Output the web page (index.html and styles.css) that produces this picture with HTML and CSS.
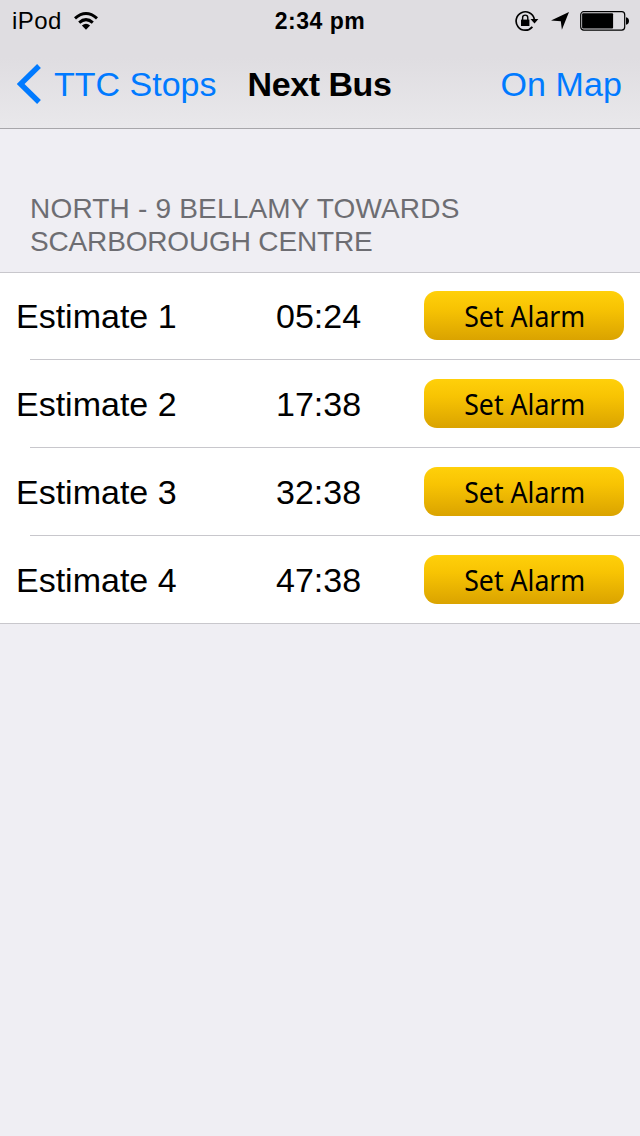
FILE: index.html
```html
<!DOCTYPE html>
<html lang="en">
<head>
<meta charset="utf-8">
<title>Next Bus</title>
<link rel="stylesheet" href="styles.css">
</head>
<body>
<header class="top">
  <div class="status">
    <div class="status-left">
      <span class="device">iPod</span>
      <svg class="wifi" width="26" height="20" viewBox="0 0 26 20">
        <g fill="none" stroke="#000" stroke-width="3">
          <path d="M2 7.4Q13 -2.4 24 7.4"/>
          <path d="M6.2 11.6Q13 5.6 19.8 11.6"/>
        </g>
        <path d="M8.9 14.4Q13 11 17.1 14.4L13 18.7Z"/>
      </svg>
    </div>
    <span class="clock">2:34 pm</span>
    <div class="status-right">
      <svg width="24" height="22" viewBox="0 0 24 22">
        <path d="M17.4 16.9A9.2 9.2 0 1 1 19.3 9" fill="none" stroke="#000" stroke-width="1.7"/>
        <path d="M15.5 9H23.4L19.5 13.6Z"/>
        <path d="M6 9.6H14.4V16H6Z"/>
        <path d="M7.6 10V7.7a2.6 2.6 0 0 1 5.2 0V10" fill="none" stroke="#000" stroke-width="1.4"/>
      </svg>
      <svg class="arrow" width="18" height="18" viewBox="0 0 18 18"><path d="M18 0L10.9 17.8L9.8 9.2L0 8.6Z"/></svg>
      <svg class="battery" width="50" height="20" viewBox="0 0 50 20">
        <rect x=".7" y=".7" width="44" height="18.4" rx="3" fill="none" stroke="#000" stroke-width="1.2"/>
        <rect x="2.1" y="2.3" width="31" height="15.2" rx="1"/>
        <path d="M46 6.2Q49 7 49 10T46 13.8Z"/>
      </svg>
    </div>
  </div>
  <nav class="nav">
    <a class="back">
      <svg width="24" height="40" viewBox="0 0 24 40"><path d="M22 2L3.6 20L22 38" fill="none" stroke="#007aff" stroke-width="5.4"/></svg>
      <span class="back-label">TTC Stops</span>
    </a>
    <h1 class="title">Next Bus</h1>
    <a class="map">On Map</a>
  </nav>
</header>
<main>
  <h2 class="route"><span class="route-name">NORTH - 9 BELLAMY TOWARDS</span><span class="route-end">SCARBOROUGH CENTRE</span></h2>
  <ul class="list">
    <li class="row"><span class="name">Estimate 1</span><span class="time">05:24</span><button class="alarm"><span class="alarm-label">Set Alarm</span></button></li>
    <li class="row"><span class="name">Estimate 2</span><span class="time">17:38</span><button class="alarm"><span class="alarm-label">Set Alarm</span></button></li>
    <li class="row"><span class="name">Estimate 3</span><span class="time">32:38</span><button class="alarm"><span class="alarm-label">Set Alarm</span></button></li>
    <li class="row"><span class="name">Estimate 4</span><span class="time">47:38</span><button class="alarm"><span class="alarm-label">Set Alarm</span></button></li>
  </ul>
</main>
</body>
</html>
```
FILE: styles.css
```css
* { box-sizing: border-box; }
body {
  margin: 0;
  min-height: 1136px;
  background: #efeef3;
  color: #000;
  font-family: "Liberation Sans", Arial, sans-serif;
}
.top {
  height: 129px;
  border-bottom: 1px solid #a7a6aa;
  background: linear-gradient(#dfdde1 0, #dfdde1 45%, #e9e8eb 100%);
}
.status {
  display: grid;
  grid-template-columns: 1fr auto 1fr;
  align-items: center;
  height: 42px;
  padding: 2px 11px 0;
  font-size: 24px;
  line-height: 38px;
}
.status-left, .status-right { display: flex; align-items: center; }
.status-left { padding-left: 1px; }
.device { letter-spacing: 0.4px; }
.wifi { margin-left: 11px; }
.status-left, .clock, .status-right { height: 38px; }
.clock { font-weight: 700; font-size: 23px; letter-spacing: 0.5px; }
.status-right { justify-content: flex-end; margin-right: -1px; }
.status > * { margin-bottom: 2px; }
.arrow { margin-left: 12px; }
.battery { margin-left: 11px; }
.nav {
  display: grid;
  grid-template-columns: 1fr auto 1fr;
  align-items: center;
  height: 86px;
  padding: 0 18px 2px 17px;
  font-size: 34px;
}
.back, .map { color: #007aff; white-space: nowrap; }
.back { display: flex; align-items: center; }
.back-label { margin-left: 13px; }
.title { margin: 0; font-size: 34px; font-weight: 700; letter-spacing: -0.45px; }
.map { justify-self: end; letter-spacing: 0.1px; }
.route {
  margin: 0;
  height: 143px;
  padding: 63px 30px 0;
  color: #6d6d72;
  font-size: 28px;
  font-weight: 400;
  line-height: 33px;
}
.route span { display: block; white-space: nowrap; }
.route-name { letter-spacing: 0.19px; }
.route-end { letter-spacing: -0.16px; }
.list {
  margin: 0;
  padding: 0;
  list-style: none;
  background: #fff;
  border-top: 1px solid #c8c7cc;
  border-bottom: 1px solid #c8c7cc;
}
.row {
  display: grid;
  grid-template-columns: 260px 148px 200px;
  align-items: center;
  height: 88px;
  padding: 0 16px;
  background: linear-gradient(#c8c7cc, #c8c7cc) 30px 100% / 100% 1px no-repeat;
  font-size: 34px;
}
.row:first-child { height: 87px; }
.row:last-child { background: none; height: 87px; }
.name, .time { line-height: 39px; }
.row:last-child .name, .row:last-child .time { padding-top: 1px; }
.alarm {
  align-self: start;
  display: flex;
  align-items: center;
  justify-content: center;
  height: 49px;
  margin-top: 19px;
  padding: 0;
  border: 0;
  border-radius: 13px;
  background: linear-gradient(#ffd00a, #f8c403 35%, #daa300);
  color: #000;
  font: 29px/47px "Noto Sans", sans-serif;
}
.row:first-child .alarm { margin-top: 18px; }
.alarm-label { padding: 0 0 0 2px; white-space: nowrap; transform: scaleX(0.92); }
```
